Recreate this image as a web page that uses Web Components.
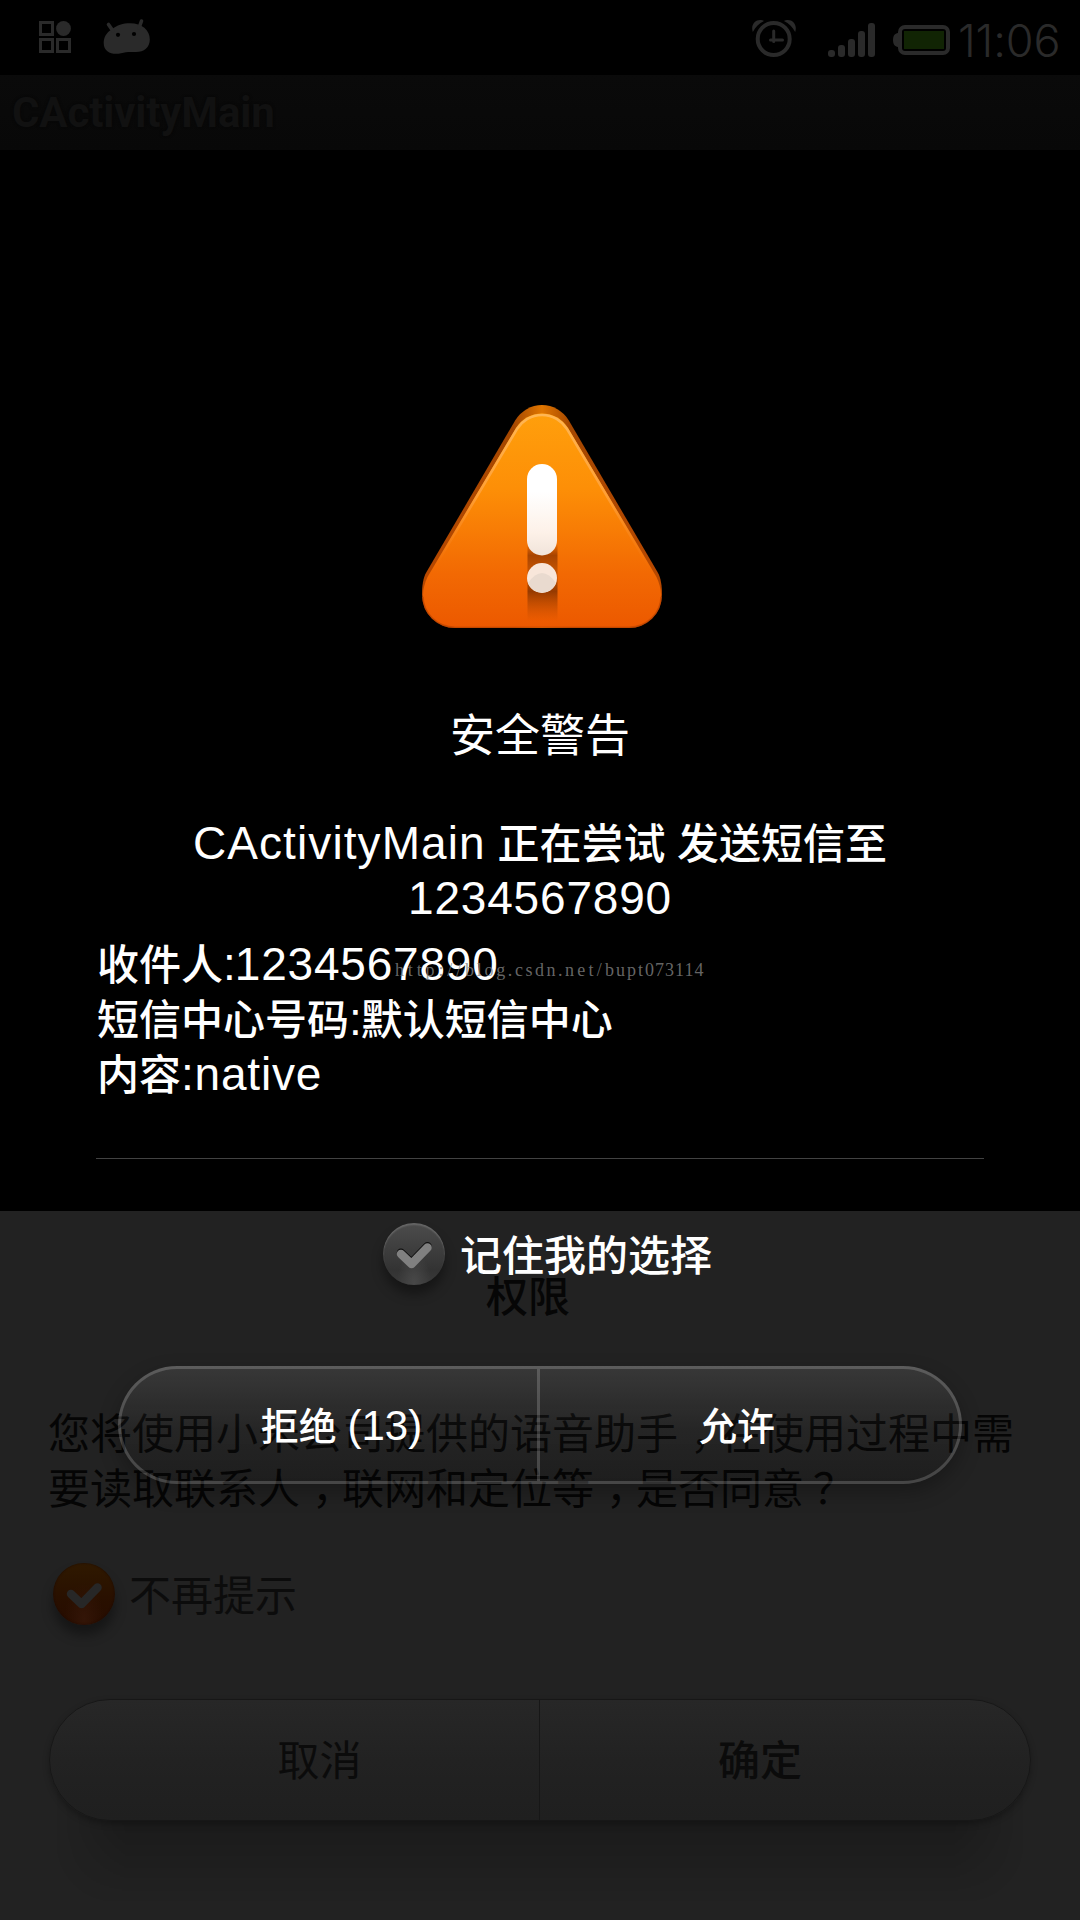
<!DOCTYPE html>
<html lang="zh-CN">
<head>
<meta charset="utf-8">
<title>安全警告</title>
<style>
html,body{margin:0;padding:0;background:#000}
body{width:1080px;height:1920px;overflow:hidden;font-family:"Liberation Sans","Noto Sans CJK SC",sans-serif}
</style>
</head>
<body>
<phone-screen></phone-screen>
<script>
const define=(name,html)=>customElements.define(name,class extends HTMLElement{
  constructor(){super();const t=document.createElement('template');t.innerHTML=html;this.attachShadow({mode:'open'}).append(t.content.cloneNode(true));}
});

define('status-bar',`<style>
:host{display:flex;justify-content:space-between;height:75px;color:#2a2a2a;flex:none}
svg{display:block;fill:currentColor}
.right{display:flex}
.time{font-family:Inter,"Liberation Sans",sans-serif;font-weight:300;font-size:45px;line-height:75px;width:122px;height:75px;padding-top:3px;box-sizing:border-box;letter-spacing:-.1px;white-space:nowrap}
</style>
<svg width="170" height="75" viewBox="0 0 170 75">
 <g fill="none" stroke="#2a2a2a" stroke-width="3"><rect x="40.5" y="22.5" width="12" height="12"/><rect x="40.5" y="39.5" width="12" height="12"/><rect x="57.5" y="39.5" width="12" height="12"/></g>
 <circle cx="63.5" cy="28.5" r="7.4"/>
 <path d="M111.500 29.500C117 25 123 23.200 130 23.200C142 23.200 149.800 30 149.800 39.500C149.800 47.500 144 52 136 52C129 51.800 126 51.800 121 53.200C113 55.300 103.700 52.500 103.700 43C103.700 37.500 106.500 32.500 111.500 29.500Z"/>
 <path d="M108.500 24.500L113 31M141.500 21L139 28" stroke="#2a2a2a" stroke-width="3.600" stroke-linecap="round"/>
 <circle cx="118" cy="34.800" r="2.100" fill="#000"/><circle cx="134" cy="34" r="2.100" fill="#000"/>
</svg>
<div class="right">
<svg width="208" height="75" viewBox="750 0 208 75">
 <circle cx="773.700" cy="39" r="16" fill="none" stroke="#2a2a2a" stroke-width="4"/>
 <path d="M773.700 31V41.500M770.500 40H782.500" fill="none" stroke="#2a2a2a" stroke-width="3" stroke-linecap="round"/>
 <path d="M752.800 32C750.500 25 755 20 760 20C761.500 20 763 20.300 764 21C759 23.500 755.500 27 752.800 32ZM795.200 32C797.500 25 793 20 788 20C786.500 20 785 20.300 784 21C789 23.500 792.500 27 795.200 32Z"/>
 <rect x="828" y="50" width="7" height="7" rx="3"/><rect x="838" y="45" width="7" height="12" rx="3"/><rect x="848" y="39" width="7" height="18" rx="3"/><rect x="858" y="31" width="7" height="26" rx="3"/><rect x="868" y="23" width="7" height="34" rx="3"/>
 <path d="M899 33C895 33 893 35.500 893 40S895 47 899 47Z"/>
 <rect x="900" y="27" width="48" height="26" rx="5" fill="none" stroke="#2a2a2a" stroke-width="4"/>
 <rect x="904" y="31" width="40" height="18" fill="#112404"/>
</svg>
<div class="time">11:06</div>
</div>`);

define('title-bar',`<style>
:host{display:block;height:75px;flex:none;box-sizing:border-box;background:linear-gradient(#0a0a0a,#080808);color:#111;padding-left:12px;font:700 42px/76px Roboto,sans-serif;letter-spacing:-.15px;text-shadow:0 0 3px #060606}
</style><slot></slot>`);

define('check-circle',`<style>
:host{display:block;width:62px;height:62px;border-radius:50%;flex:none;background:radial-gradient(ellipse at 50% 96%,#484848,transparent 38%),linear-gradient(#4c4c4c,#333 75%,#3a3a3a);--tick:#808080;--edge:#101010}
:host([tone=orange]){background:radial-gradient(ellipse at 50% 90%,#331507,transparent 45%),linear-gradient(#2f1900,#291000 55%,#270c00);box-shadow:inset 0 0 2px #1a0900,0 10px 12px rgba(0,0,0,.38);--tick:#272727;--edge:transparent}
:host(:not([tone])){box-shadow:inset 0 2px 1.500px #666,0 9px 12px rgba(0,0,0,.38)}
svg{display:block}path{fill:none;stroke-width:8.500;stroke-linecap:round;stroke-linejoin:round}
</style><svg width="62" height="62" viewBox="0 0 62 62"><path d="M18 29.800L28.500 39.800L44.500 23.300" style="stroke:var(--edge)"/><path d="M18 31L28.500 41L44.500 24.500" style="stroke:var(--tick)"/></svg>`);

define('pill-group',`<style>
:host{display:flex;box-sizing:border-box;position:relative;flex:none}
:host([kind=sheet]){width:982px;height:122px;border-radius:61px;border:1px solid #171717;background:linear-gradient(#272727,#222 50%,#1f1f1f);color:#0b0b0b;font-size:42px;--line:#171717;--lw:1px;box-shadow:0 3px 6px rgba(0,0,0,.28)}
:host([kind=sheet])::before{content:"";position:absolute;z-index:-1;left:6px;right:6px;top:62px;height:140px;background:linear-gradient(rgba(0,0,0,.24),rgba(0,0,0,.18) 50%,transparent);border-radius:0 0 60px 60px;-webkit-mask-image:linear-gradient(90deg,transparent,#000 70px,#000 calc(100% - 70px),transparent);mask-image:linear-gradient(90deg,transparent,#000 70px,#000 calc(100% - 70px),transparent)}
:host([kind=alert]){width:844px;height:118px;border-radius:59px;border:3px solid rgba(255,255,255,.18);background:linear-gradient(rgba(255,255,255,.1),rgba(128,128,128,.04) 55%,rgba(0,0,0,.13)) border-box;color:#fff;font-size:38px;font-weight:500;--line:rgba(255,255,255,.18);--lw:3px;box-shadow:0 8px 20px rgba(0,0,0,.28)}
.a,.b{display:flex;align-items:center;justify-content:center;box-sizing:border-box}
.a{width:50%;padding-left:var(--in);border-right:var(--lw) solid var(--line)}
.b{flex:1;padding-right:var(--in)}
:host([kind=sheet]) :is(.a,.b){padding-top:2px}
:host([kind=alert]) :is(.a,.b){padding-top:5px}
:host([kind=sheet]){--in:50px}
:host([kind=alert]){--in:25px}
</style><div class="a"><slot name="left"></slot></div><div class="b"><slot name="right"></slot></div>`);

define('permission-sheet',`<style>
:host{display:flex;flex-direction:column;height:709px;background:#222;color:#050505;font-size:42px;line-height:55px;box-sizing:border-box;padding:59px 49px 0;position:relative;z-index:0}
h2{margin:0;font-size:42px;font-weight:500;line-height:55px;text-align:center;padding-right:24px;color:#060606;height:55px}
p{margin:82px -10px 0 -1px;height:110px;white-space:nowrap}
i{font-style:normal;display:inline-block;width:42px;text-indent:12px}
.q{text-indent:9px}
.row{display:flex;gap:14px;align-items:center;margin:46px 0 0 4px;height:62px;color:#0c0c0c}
.row span{padding-top:4px}
pill-group{margin-top:74px}
b{font-weight:500}
</style>
<h2>权限</h2>
<p>您将使用小米公司提供的语音助手<i>，</i>在使用过程中需<br>要读取联系人<i>，</i>联网和定位等<i>，</i>是否同意<i class="q">？</i></p>
<div class="row"><check-circle tone="orange"></check-circle><span>不再提示</span></div>
<pill-group kind="sheet"><span slot="left">取消</span><b slot="right">确定</b></pill-group>`);

define('warning-icon',`<style>:host{display:block;width:240px;height:223px}svg{display:block}</style>
<svg width="240" height="223" viewBox="0 0 240 223">
<defs>
<linearGradient id="o" x2="1" y2="0"><stop stop-color="#b84800"/><stop offset=".38" stop-color="#a44700"/><stop offset=".5" stop-color="#e07600"/><stop offset=".62" stop-color="#a44700"/><stop offset="1" stop-color="#b84800"/></linearGradient>
<linearGradient id="f" x2="0" y2="1"><stop stop-color="#ff9f0c"/><stop offset=".35" stop-color="#fd8f07"/><stop offset=".75" stop-color="#f26903"/><stop offset="1" stop-color="#ec5900"/></linearGradient>
<linearGradient id="h" x2="0" y2="1"><stop stop-color="#ffb653"/><stop offset=".5" stop-color="#ff9f35"/><stop offset=".96" stop-color="#f57b1c" stop-opacity="0"/></linearGradient>
<linearGradient id="w" x2="0" y2="1"><stop offset=".3" stop-color="#fff"/><stop offset=".75" stop-color="#fdf1e8"/><stop offset="1" stop-color="#f1e4da"/></linearGradient>
<linearGradient id="s" x2="0" y2="1"><stop stop-color="#a23d00" stop-opacity="0"/><stop offset=".16" stop-color="#a84400"/><stop offset=".4" stop-color="#c95704"/><stop offset=".62" stop-color="#963a00"/><stop offset="1" stop-color="#c04a00" stop-opacity="0"/></linearGradient>
</defs>
<path fill="url(#o)" d="M93.300 15.300A31 31 0 0 1 146.700 15.300L235.500 167C239 173 240 181 240 190A33 33 0 0 1 207 223L33 223A33 33 0 0 1 0 190C0 181 1 173 4.500 167Z"/>
<path fill="url(#f)" d="M94 23A30.500 30.500 0 0 1 146 23L234.500 172C237 178 239 183 239 190A32 32 0 0 1 207 222L33 222A32 32 0 0 1 1 190C1 183 3 178 5.500 172Z"/>
<path fill="none" stroke="url(#h)" stroke-width="2.600" d="M7.500 171L95.200 23.700A29.300 29.300 0 0 1 144.800 23.700L232.500 171"/>
<path fill="none" stroke="#c94900" stroke-width="1.500" opacity=".7" d="M1 192A32 31 0 0 0 33 222.200H207A32 31 0 0 0 239 192"/>
<rect x="105.500" y="138" width="30" height="78" fill="url(#s)"/>
<rect x="105" y="59" width="30" height="91.500" rx="15" fill="url(#w)"/>
<circle cx="120" cy="173" r="15" fill="#f8e6da"/><path d="M106 178Q120 158 134 178A15 15 0 0 1 106 178Z" fill="#e9dacf"/>
</svg>`);

define('security-alert',`<style>
:host{position:absolute;inset:0;z-index:2;display:flex;flex-direction:column;align-items:center;color:#fff;font-size:42px;line-height:55px;padding-top:405px;box-sizing:border-box;font-weight:500}
warning-icon{margin-left:3px}
h1{margin:79px 0 0;font-weight:400;font-size:45px;line-height:60px;height:60px}
.msg{margin-top:50px;text-align:center;height:110px;white-space:nowrap}
.l{font-size:46px;line-height:1;letter-spacing:.8px;font-weight:400}
.w{letter-spacing:1.1px}
.c{letter-spacing:-1px}
.details{align-self:stretch;margin:11px 96px 0;height:221px;border-bottom:1px solid #424242;position:relative;box-sizing:border-box;white-space:nowrap}
.details div{height:55px;padding-left:1px}
.mark{position:absolute;left:299px;top:22px;font:400 18px/20px "Liberation Serif",serif;color:rgba(128,128,128,.8)}
.row{display:flex;gap:15px;align-items:center;height:62px;margin-top:64px;padding-left:15px}
.row span{padding-top:4px}
pill-group{margin-top:81px}
</style>
<warning-icon></warning-icon>
<h1>安全警告</h1>
<div class="msg"><span class="l w">CActivityMain</span> 正在尝试 发送短信至<br><span class="l">1234567890</span></div>
<div class="details">
<div>收件人<span class="l"><span class="c">:</span>1234567890</span></div>
<div>短信中心号码<span class="l c">:</span>默认短信中心</div>
<div>内容<span class="l">:native</span></div>
<span class="mark"><span style="letter-spacing:3.860px">http://</span><span style="letter-spacing:2.700px">blog.</span><span style="letter-spacing:2.500px">csdn.</span><span style="letter-spacing:3.250px">net/</span><span style="letter-spacing:2px">bupt</span><span style="letter-spacing:1px">073114</span></span>
</div>
<div class="row"><check-circle></check-circle><span>记住我的选择</span></div>
<pill-group kind="alert"><span slot="left">拒绝 <span style="font-size:42px;line-height:1;font-weight:400">(13)</span></span><span slot="right">允许</span></pill-group>`);

define('phone-screen',`<style>
:host{display:flex;flex-direction:column;position:relative;width:1080px;height:1920px;background:#000;overflow:hidden}
.app{flex:1}
</style>
<status-bar></status-bar><title-bar>CActivityMain</title-bar><div class="app"></div><permission-sheet></permission-sheet>
<security-alert></security-alert>`);
</script>
</body>
</html>
